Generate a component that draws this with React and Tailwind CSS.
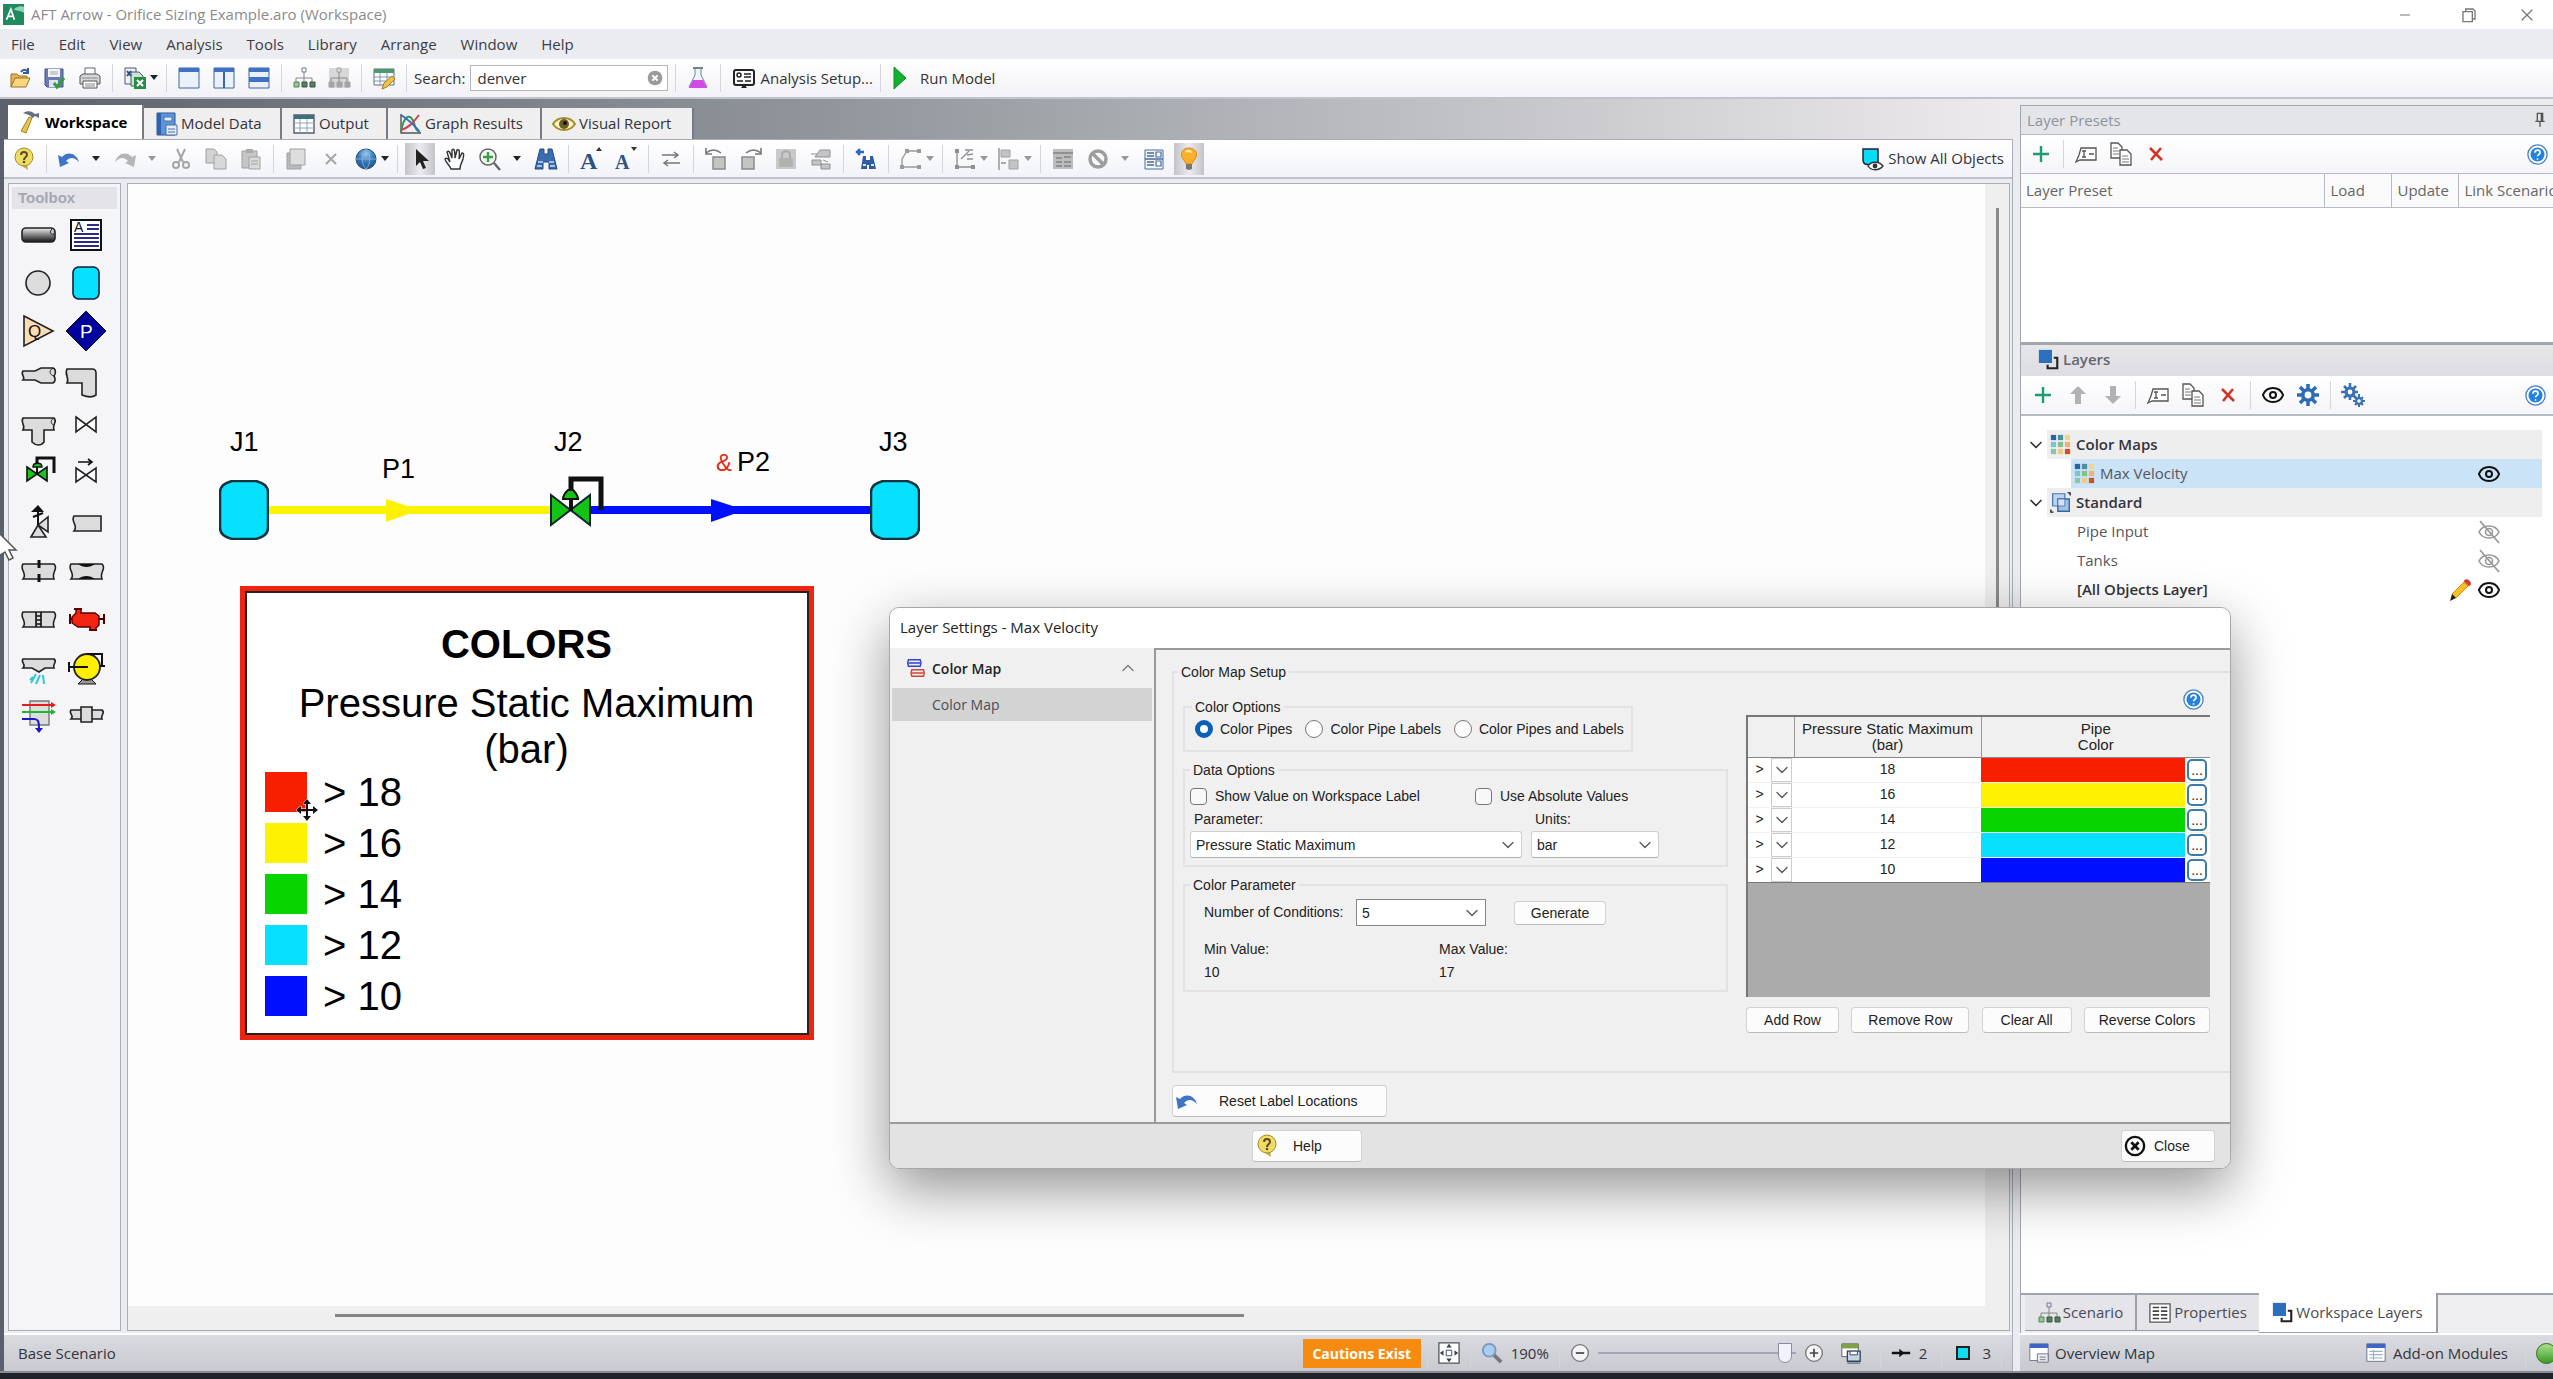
import { useState } from 'react'
import { Eye, X, Minus, ChevronDown, ChevronUp } from 'lucide-react'

const UI_FONT = "font-['Open_Sans','Noto_Sans',sans-serif]"
const FORM_FONT = "font-['Liberation_Sans',Arial,sans-serif]"

const CONDITIONS = [
  { value: 18, bg: 'bg-[#f81e00]' },
  { value: 16, bg: 'bg-[#fff200]' },
  { value: 14, bg: 'bg-[#08d400]' },
  { value: 12, bg: 'bg-[#08e0ff]' },
  { value: 10, bg: 'bg-[#0010ff]' },
]

const MENUS = ['File', 'Edit', 'View', 'Analysis', 'Tools', 'Library', 'Arrange', 'Window', 'Help']

function Svg({ children, size = 'h-6 w-6', box = '0 0 24 24' }) {
  return (
    <svg viewBox={box} className={`${size} shrink-0 overflow-visible`} fill="none" aria-hidden="true">
      {children}
    </svg>
  )
}

/* ---------- main toolbar icons ---------- */

const AppIcon = () => (
  <Svg size="h-[21px] w-[21px]">
    <path d="M0 0h24v24H0z" fill="#1f8a5e" />
    <path d="M12 6c5-4 8-4 12-3v7c-5-3-8-2-12-4z" fill="#8fd4b4" />
    <path d="M4 18L9 6l4 12M6 14h6" stroke="#fff" strokeWidth="2" />
  </Svg>
)
const OpenIcon = () => (
  <Svg>
    <path d="M3 21V8h6l2 2h8v3" fill="#e8b44c" stroke="#9a7224" />
    <path d="M3 21l4-9h15l-4 9z" fill="#f8d680" stroke="#9a7224" />
    <path d="M13 6c2-3 5-3 7 0M20 2v5h-5" stroke="#355a9c" strokeWidth="2" />
  </Svg>
)
const SaveIcon = () => (
  <Svg>
    <path d="M2 3h18v18H4l-2-2z" fill="#6e79b4" stroke="#454e86" />
    <path d="M5 3h12v8H5z" fill="#f2f4fa" />
    <path d="M7 6h8M7 8h8" stroke="#9aa" />
    <path d="M6 14h9v7H6z" fill="#dfe4ee" />
    <path d="M11 17l3 4 7-9" stroke="#2f9e3c" strokeWidth="3" />
  </Svg>
)
const PrintIcon = () => (
  <Svg>
    <path d="M7 9V2h10v7" fill="#fff" stroke="#666" />
    <path d="M2 10l3-2h14l3 2v8H2z" fill="#d5d7da" stroke="#555" />
    <path d="M5 15h14v7H5z" fill="#fff" stroke="#555" />
    <path d="M7 18h10M7 20h10M4 12h16" stroke="#888" />
  </Svg>
)
const ExportIcon = () => (
  <Svg>
    <path d="M2 2h11v16H2z" fill="#eef2f8" stroke="#557" />
    <path d="M8 6h8l4 4v10H8z" fill="#cfe3d5" stroke="#3b6b4e" />
    <path d="M4 5l4 5M8 5l-4 5" stroke="#2a4b90" strokeWidth="2" />
    <path d="M11 11h12v12H11z" fill="#2a8c46" />
    <path d="M14 14l6 6M20 14l-6 6" stroke="#fff" strokeWidth="2" />
  </Svg>
)
function WindowIcon({ split }) {
  return (
    <Svg>
      <path d="M2 2h20v20H2z" fill="#eaf1fb" stroke="#3c64a8" />
      <path d="M2 2h20v4H2z" fill="#3f72c4" />
      {split === 'v' && <path d="M12 6v16" stroke="#3c64a8" strokeWidth="2" />}
      {split === 'h' && <path d="M2 11h20v5H2z" fill="#3f72c4" />}
    </Svg>
  )
}
function OrgIcon({ muted, size }) {
  const c = muted ? '#a4a4a4' : '#5b7f62'
  return (
    <Svg size={size}>
      {muted && <path d="M2 2h20v20H2z" fill="#d8d8d8" />}
      <path d="M10 2h4v4h-4z" stroke={muted ? c : '#6a7894'} />
      <path d="M12 6v6M4 16v-4h16v4M12 12v4" stroke="#888" />
      <path d="M2 16h5v5H2z" fill={muted ? c : '#8fce84'} stroke={c} />
      <path d="M10 16h5v5h-5zM18 16h5v5h-5z" fill={c} stroke={muted ? c : '#33583a'} />
    </Svg>
  )
}
const TablePenIcon = () => (
  <Svg>
    <path d="M2 3h20v16H2z" fill="#fff" stroke="#5a6c86" />
    <path d="M2 3h20v4H2z" fill="#4c9a74" />
    <path d="M2 11h20M2 15h20M8 7v12M15 7v12" stroke="#8294b0" />
    <path d="M10 23l2-6 8-7 3 3-8 8z" fill="#f2c248" stroke="#a37b20" />
  </Svg>
)
const FlaskIcon = () => (
  <Svg>
    <path d="M9 2v7L3 21h18L15 9V2" fill="#eef3f7" stroke="#6c8494" />
    <path d="M7 14h10l4 8H3z" fill="#d34be6" />
    <path d="M7 2h10" stroke="#6c8494" strokeWidth="2" />
  </Svg>
)
const SetupIcon = () => (
  <Svg>
    <rect x="2" y="4" width="20" height="15" rx="2" stroke="#222" strokeWidth="2" />
    <circle cx="7" cy="9" r="2" stroke="#222" strokeWidth="1.5" />
    <path d="M12 8h7M12 11h7M5 15h6M13 15h6" stroke="#222" strokeWidth="1.5" />
    <path d="M9 22l3-4 3 4z" fill="#222" />
  </Svg>
)
const PlayIcon = () => (
  <Svg>
    <path d="M6 1l12 11L6 23z" fill="#14b030" stroke="#0d8a24" />
  </Svg>
)
const ClearIcon = () => (
  <Svg size="h-4 w-4">
    <circle cx="12" cy="12" r="11" fill="#9b9b9b" />
    <path d="M8 8l8 8M16 8l-8 8" stroke="#fff" strokeWidth="3" />
  </Svg>
)

/* ---------- workspace toolbar icons ---------- */

const HelpBulbIcon = () => (
  <Svg>
    <path d="M10 16h5l1 7-6-4z" fill="#c9a93a" />
    <circle cx="12" cy="10" r="9" fill="#efdc66" stroke="#a48b2a" />
    <path d="M9 8c0-4 6-4 6 0 0 2-3 2-3 5" stroke="#5c4c1c" strokeWidth="2" />
    <circle cx="12" cy="15" r="1.3" fill="#5c4c1c" />
  </Svg>
)
function UndoIcon({ redo }) {
  const c = redo ? '#b5b5b5' : '#3f74c6'
  return (
    <Svg>
      <g transform={redo ? 'matrix(-1 0 0 1 24 0)' : undefined}>
        <path d="M1 8l2 12 9-4-3-2c4-4 8-4 13 1-2-8-11-12-17-5z" fill={c} />
      </g>
    </Svg>
  )
}
const CutIcon = () => (
  <Svg>
    <path d="M8 2l6 13M16 2l-6 13" stroke="#a5a5a5" strokeWidth="2" />
    <circle cx="7" cy="18" r="3" stroke="#a5a5a5" strokeWidth="2" />
    <circle cx="17" cy="18" r="3" stroke="#a5a5a5" strokeWidth="2" />
  </Svg>
)
const CopyGrayIcon = () => (
  <Svg>
    <path d="M2 2h8l3 3v11H2z" fill="#d2d2d2" stroke="#a0a0a0" />
    <path d="M10 8h8l4 4v10H10z" fill="#d8d8d8" stroke="#a0a0a0" />
  </Svg>
)
const PasteIcon = () => (
  <Svg>
    <path d="M3 4h15v17H3z" fill="#c6c6c6" stroke="#a0a0a0" />
    <path d="M7 2h7v4H7z" fill="#aaa" />
    <path d="M10 10h11v12H10z" fill="#dadada" stroke="#a0a0a0" />
    <path d="M12 14h7M12 17h7" stroke="#a0a0a0" />
  </Svg>
)
const StackIcon = () => (
  <Svg>
    <path d="M3 6h14v16H3z" fill="#bbb" stroke="#a0a0a0" />
    <path d="M6 2h15v16H6z" fill="#ddd" stroke="#a0a0a0" />
  </Svg>
)
const GlobeIcon = () => (
  <Svg>
    <defs>
      <radialGradient id="globe" cx="0.5" cy="0.25" r="0.8">
        <stop offset="0" stopColor="#9cc8ec" />
        <stop offset="0.5" stopColor="#3478b8" />
        <stop offset="1" stopColor="#1c4c84" />
      </radialGradient>
    </defs>
    <circle cx="12" cy="12" r="10" fill="url(#globe)" stroke="#24507e" />
    <path d="M2 12h20M12 2c-5 5-5 15 0 20M12 2c5 5 5 15 0 20" stroke="#8db8de" strokeWidth="0.8" />
  </Svg>
)
const PointerIcon = () => (
  <Svg>
    <path d="M8 2v17l4-4 3 7 3-1-3-7h6z" fill="#222" />
  </Svg>
)
const HandIcon = () => (
  <Svg>
    <path d="M8 22c-1-4-6-7-6-10 2-2 3 0 5 3L4 5c2-2 3 0 5 6L9 3c2-2 3 0 3 8l2-8c2-1 3 0 2 9l3-6c2 0 2 1 1 6-1 4-3 5-3 10z" fill="#fff" stroke="#333" strokeWidth="1.4" />
  </Svg>
)
const ZoomIcon = () => (
  <Svg>
    <circle cx="10" cy="10" r="8" fill="#f3faf2" stroke="#666" strokeWidth="1.5" />
    <path d="M16 16l6 7" stroke="#666" strokeWidth="2.4" />
    <path d="M10 5v10M5 10h10" stroke="#3aa048" strokeWidth="2.4" />
  </Svg>
)
const BinocularsIcon = () => (
  <Svg>
    <path d="M6 2h4v5h4V2h4l5 20h-8v-7H9v7H1z" fill="#3a6cb0" stroke="#24487c" />
    <path d="M4 15h5M15 15h5M3 19h5M16 19h5" stroke="#c9dcf3" strokeWidth="1.6" />
  </Svg>
)
function FontSizeIcon({ up }) {
  return (
    <Svg>
      <text x="1" y="22" fontFamily="Liberation Serif, serif" fontWeight="700" fontSize={up ? 24 : 20} fill="#2d5286">A</text>
      {up ? <path d="M17 4l3-4 3 4z" fill="#333" /> : <path d="M17 0l3 4 3-4z" fill="#333" />}
    </Svg>
  )
}
const SwapIcon = () => (
  <Svg>
    <path d="M3 8h16M15 5l4 3-4 3M21 16H5M9 13l-4 3 4 3" stroke="#777" strokeWidth="1.5" />
  </Svg>
)
function RotateIcon({ right }) {
  return (
    <Svg>
      <g transform={right ? 'matrix(-1 0 0 1 24 0)' : undefined}>
        <path d="M9 10h12v12H9z" fill="#c4c4c4" stroke="#8a8a8a" strokeWidth="1.5" />
        <path d="M17 6C12 2 7 2 2 6M2 1v6h6" stroke="#777" strokeWidth="1.6" />
      </g>
    </Svg>
  )
}
const LockIcon = () => (
  <Svg>
    <path d="M2 2h20v20H2z" fill="#c9c9c9" />
    <path d="M8 11V8c0-5 8-5 8 0v3" stroke="#aaa" strokeWidth="2" />
    <path d="M5 11h14v9H5z" fill="#b2b2b2" />
  </Svg>
)
const RenumberIcon = () => (
  <Svg>
    <path d="M6 10L11 3h10v7zM3 13h9v5H3zM12 17h9v5h-9z" fill="#c4c4c4" stroke="#909090" />
    <path d="M2 7h6M14 13l5 2" stroke="#909090" />
  </Svg>
)
const FindIcon = () => (
  <Svg>
    <path d="M3 5h7M6 2L3 5l3 3" stroke="#2d66c4" strokeWidth="2.4" />
    <path d="M9 9h3v4h4V9h3l3 13h-7v-4h-2v4H7z" fill="#2f5ca0" />
    <path d="M9 18h3M17 18h3" stroke="#d6e4f6" strokeWidth="2" />
  </Svg>
)
const PolyIcon = () => (
  <Svg>
    <path d="M20 4H8L3 12v8h17" stroke="#9a9a9a" strokeWidth="1.4" />
    <path d="M6 2h4v4H6zM18 2h4v4h-4zM1 18h4v4H1zM18 18h4v4h-4z" fill="#9a9a9a" />
  </Svg>
)
const AxisIcon = () => (
  <Svg>
    <path d="M4 2v18h17M8 12l8-8M12 3h8M14 8l6-1M14 12h6" stroke="#909090" strokeWidth="1.4" />
    <path d="M2 2h4v4H2zM2 18h4v4H2zM18 18h4v4h-4z" fill="#909090" />
  </Svg>
)
const AlignIcon = () => (
  <Svg>
    <path d="M2 1v22M4 16h5" stroke="#909090" strokeWidth="1.4" />
    <path d="M4 3h9v7H4zM12 13h9v9h-9z" fill="#c4c4c4" stroke="#a0a0a0" />
  </Svg>
)
const FormIcon = () => (
  <Svg>
    <path d="M2 2h20v20H2z" fill="#bdbdbd" />
    <path d="M2 6h20M5 11h6M13 10h7M5 15h6M13 15h7M5 19h6M13 19h7" stroke="#909090" strokeWidth="2" />
  </Svg>
)
const ForbidIcon = () => (
  <Svg>
    <circle cx="12" cy="12" r="8" stroke="#9e9e9e" strokeWidth="3.5" />
    <path d="M6 6l12 12" stroke="#9e9e9e" strokeWidth="3.5" />
  </Svg>
)
const SheetIcon = () => (
  <Svg>
    <path d="M3 3h18v19H3z" fill="#f4f8fd" stroke="#476a9c" />
    <path d="M3 12h18M5 6h7M5 9h7M5 15h7M5 18h7" stroke="#476a9c" strokeWidth="1.4" />
    <path d="M14 5h5v5h-5zM14 14h5v5h-5z" stroke="#476a9c" strokeWidth="1.2" />
  </Svg>
)
const BulbIcon = () => (
  <Svg>
    <path d="M12 1c-6 0-9 5-7 9 1 3 3 4 4 7h6c1-3 3-4 4-7 2-4-1-9-7-9z" fill="#fbb02c" stroke="#d88c14" />
    <path d="M9 5c2-2 5-1 5 1" stroke="#fff0c0" strokeWidth="2" />
    <path d="M9 17h6v5l-3 1-3-1z" fill="#777" />
  </Svg>
)
const ShowAllIcon = () => (
  <Svg>
    <path d="M3 2h15v15c-4 1-11 1-13 0-2-1-2-3-2-4z" fill="#08dcf4" stroke="#223" strokeWidth="1.5" />
    <path d="M8 19c3-5 11-5 15 0-4 5-12 5-15 0z" fill="#fff" stroke="#333" strokeWidth="1.4" />
    <circle cx="15" cy="19" r="2.4" fill="#333" />
  </Svg>
)

/* ---------- tab icons ---------- */

const HammerIcon = () => (
  <Svg>
    <path d="M5 3c5-3 9-2 12 1l4-1v5l-4-2-2 2-4-3z" fill="#66707c" />
    <path d="M11 7l3 1-6 15-5-2z" fill="#e6c34a" stroke="#a3832a" />
  </Svg>
)
const NotebookIcon = () => (
  <Svg>
    <path d="M3 1h18v22H3z" fill="#5b96dc" stroke="#2c5796" />
    <path d="M3 1h4v22H3z" fill="#2f62ac" />
    <path d="M10 5h8v4h-8zM12 13h11v10H12z" fill="#e5edf8" stroke="#4a6ea6" />
    <path d="M14 17h7M14 20h7" stroke="#4a6ea6" />
  </Svg>
)
const GridIcon = () => (
  <Svg>
    <path d="M2 3h20v18H2z" fill="#fff" stroke="#4d6076" strokeWidth="1.4" />
    <path d="M2 3h20v4H2z" fill="#3f6f7e" />
    <path d="M2 11h20M2 16h20M8 7v14M15 7v14" stroke="#8fa4b8" />
  </Svg>
)
const ChartIcon = () => (
  <Svg>
    <path d="M3 2v19h20" stroke="#555" strokeWidth="1.4" />
    <path d="M3 20C6 2 13 1 16 11c1 5 3 8 6 9" stroke="#2f9a50" strokeWidth="2" />
    <path d="M3 3c5 3 12 9 18 16" stroke="#3868c8" strokeWidth="2" />
    <path d="M3 18C10 16 14 12 21 3" stroke="#d03f58" strokeWidth="2" />
  </Svg>
)
const GoldEyeIcon = () => (
  <Svg>
    <path d="M1 12c5-8 17-8 22 0-5 8-17 8-22 0z" fill="#fff4c0" stroke="#a18e30" strokeWidth="2" />
    <circle cx="12" cy="12" r="5" fill="#6b5d28" />
    <circle cx="13" cy="11" r="2" fill="#111" />
  </Svg>
)

/* ---------- side panel icons ---------- */

const PlusIcon = () => (
  <Svg>
    <path d="M12 4v16M4 12h16" stroke="#1c9c72" strokeWidth="2.4" />
  </Svg>
)
const RenameIcon = () => (
  <Svg>
    <path d="M7 6h15v12H6L2 20l3-7z" fill="#fff" stroke="#555" strokeWidth="1.3" />
    <path d="M8 9h4M8 15h4M10 9v6M15 12h5" stroke="#555" strokeWidth="1.3" />
  </Svg>
)
const PagesIcon = () => (
  <Svg>
    <path d="M2 1h7l4 4v11H2z" fill="#fff" stroke="#555" strokeWidth="1.3" />
    <path d="M11 8h7l4 4v11H11z" fill="#fff" stroke="#555" strokeWidth="1.3" />
    <path d="M4 6h5M4 9h6M4 12h6M13 14h6M13 17h7M13 20h7" stroke="#777" />
  </Svg>
)
const DeleteIcon = () => (
  <Svg>
    <path d="M6 6l12 12M17 6L7 18" stroke="#d33422" strokeWidth="2.6" />
  </Svg>
)
const GrayXIcon = () => (
  <Svg>
    <path d="M7 7l10 10M17 7L7 17" stroke="#a5a5a5" strokeWidth="2" />
  </Svg>
)
function ArrowIcon({ down }) {
  return (
    <Svg>
      <path d={down ? 'M12 21l8-8h-5V3H9v10H4z' : 'M12 3l8 8h-5v10H9V11H4z'} fill="#b2b2b2" />
    </Svg>
  )
}
const InfoIcon = () => (
  <Svg size="h-[21px] w-[21px]">
    <circle cx="12" cy="12" r="11" fill="#fff" stroke="#4a80c0" strokeWidth="1.5" />
    <circle cx="12" cy="12" r="8" fill="#2583de" />
    <path d="M9 10c0-4 6-4 6 0 0 2-3 2-3 4" stroke="#fff" strokeWidth="1.8" />
    <circle cx="12" cy="17" r="1" fill="#fff" />
  </Svg>
)
const GearIcon = () => (
  <Svg>
    <path d="M12 1v22M1 12h22M4 4l16 16M20 4L4 20" stroke="#2b6cb4" strokeWidth="3.5" />
    <circle cx="12" cy="12" r="7" fill="#2b6cb4" />
    <circle cx="12" cy="12" r="3.4" fill="#fff" />
  </Svg>
)
const GearsIcon = () => (
  <Svg>
    <g stroke="#3a72b4" strokeWidth="2.6">
      <path d="M9 0v17M0 9h17M3 3l12 12M15 3L3 15" />
      <path d="M18 11v13M12 18h12M14 14l8 8M22 14l-8 8" strokeWidth="2" />
    </g>
    <circle cx="9" cy="9" r="5.5" fill="#3a72b4" />
    <circle cx="9" cy="9" r="2.4" fill="#fff" />
    <circle cx="18" cy="18" r="4" fill="#3a72b4" />
    <circle cx="18" cy="18" r="1.8" fill="#fff" />
  </Svg>
)
const LayersIcon = () => (
  <Svg size="h-[21px] w-[21px]">
    <path d="M1 1h15v15H1z" fill="#2b70bc" />
    <path d="M18 10h4v12H11v-4" stroke="#222" strokeWidth="2.4" />
  </Svg>
)
const ColorGridIcon = () => {
  const cells = ['#2a64a8', '#4a90a0', '#f2d48c', '#7cc4cc', '#84c08c', '#f2b070', '#8cc4a8', '#e8cc88', '#cc5030']
  return (
    <Svg size="h-[21px] w-[21px]">
      {cells.map((c, i) => (
        <rect key={i} x={1 + (i % 3) * 8} y={1 + Math.floor(i / 3) * 8} width="6" height="6" fill={c} />
      ))}
    </Svg>
  )
}
const StandardIcon = () => (
  <Svg size="h-[21px] w-[21px]">
    <path d="M3 2h14v14H3z" fill="#bcd3ee" stroke="#4678b0" strokeWidth="1.4" />
    <path d="M9 8h13v14H9z" fill="#a4c2e6" stroke="#3567a4" strokeWidth="1.6" />
    <path d="M9 8h8v8H9z" fill="#d4e4f6" stroke="#4678b0" />
    <path d="M20 1h3v3M1 20v3h3" stroke="#223" strokeWidth="1.6" />
  </Svg>
)
const HiddenIcon = () => (
  <Svg>
    <path d="M2 12c4-8 16-8 20 0-4 8-16 8-20 0z" stroke="#999" strokeWidth="1.6" />
    <circle cx="12" cy="12" r="3.5" stroke="#999" strokeWidth="1.6" />
    <path d="M3 1l19 22" stroke="#999" strokeWidth="1.8" />
  </Svg>
)
const PencilIcon = () => (
  <Svg>
    <path d="M4 16L16 4l4 4L8 20z" fill="#f6bf26" stroke="#c8921c" />
    <path d="M4 16l4 4-6 3z" fill="#222" />
    <path d="M17 3c2-2 7 2 4 4z" fill="#d63a30" stroke="#d63a30" strokeWidth="2" />
  </Svg>
)
const PinIcon = () => (
  <Svg size="h-4 w-4">
    <path d="M8 2h8v12H8zM5 14h14M12 14v8" stroke="#555" strokeWidth="2" />
    <path d="M13 2h3v12h-3z" fill="#555" />
  </Svg>
)
const PropsIcon = () => (
  <Svg size="h-[22px] w-[22px]">
    <path d="M1 2h22v20H1z" fill="#fff" stroke="#555" strokeWidth="1.4" />
    <path d="M4 6h7M4 10h7M4 14h7M4 18h7M13 6h7M13 10h7M13 14h7M13 18h7" stroke="#444" strokeWidth="1.8" />
  </Svg>
)
const OverviewIcon = () => (
  <Svg size="h-5 w-5">
    <path d="M1 1h22v20H1z" fill="#fff" stroke="#667" />
    <path d="M1 1h22v5H1z" fill="#3f66c4" />
    <path d="M10 13h13v10H10z" fill="#e8ebf0" stroke="#667" />
    <path d="M13 17h7M13 20h7" stroke="#667" />
  </Svg>
)
const ModulesIcon = () => (
  <Svg size="h-5 w-5">
    <path d="M1 1h22v21H1z" fill="#fff" stroke="#567" />
    <path d="M1 1h22v5H1z" fill="#3f66c4" />
    <path d="M4 10h16M4 14h16M4 18h16M9 8v12" stroke="#9ab0cc" strokeWidth="1.4" />
  </Svg>
)
const MapPairIcon = () => (
  <Svg size="h-5 w-5">
    <path d="M3 2h14l1 4-1 4H3L2 6z" stroke="#3440d8" strokeWidth="1.8" />
    <path d="M3 6h14" stroke="#3440d8" strokeWidth="1.6" />
    <path d="M7 14h14l1 4-1 4H7l-1-4z" stroke="#d04438" strokeWidth="1.8" />
    <path d="M7 18h14" stroke="#d04438" strokeWidth="1.6" />
  </Svg>
)

/* ---------- toolbox shapes, drawn in a 40x40 box ---------- */

const line = { stroke: '#222', strokeWidth: 1.6, fill: '#dcdcdc' }

const TOOLS = [
  {
    name: 'Pipe',
    draw: (
      <>
        <defs>
          <linearGradient id="pipe" x1="0" y1="0" x2="0" y2="1">
            <stop offset="0" stopColor="#eee" />
            <stop offset="1" stopColor="#111" />
          </linearGradient>
        </defs>
        <rect x="4" y="13" width="33" height="14" rx="4" fill="url(#pipe)" stroke="#222" strokeWidth="1.6" />
        <path d="M34 14c-3 3-1 6 2 5" stroke="#222" fill="#ccc" />
      </>
    ),
  },
  {
    name: 'Annotation',
    draw: (
      <>
        <path d="M5 5h30v30H5z" fill="#fff" stroke="#111" strokeWidth="2" />
        <path d="M21 10h12M21 14h12M8 19h25M8 23h25M8 27h25M8 31h25" stroke="#2c2c84" strokeWidth="2" />
        <text x="8" y="17" fontSize="14" fontFamily="Liberation Sans" fill="#111">A</text>
      </>
    ),
  },
  { name: 'Branch', draw: <circle cx="20" cy="20" r="12" {...line} /> },
  { name: 'Tank', draw: <path d="M12 4h16c4 1 5 3 5 6v20c0 3-1 5-5 6H12c-4-1-5-3-5-6V10c0-3 1-5 5-6z" fill="#08e0ff" stroke="#123" strokeWidth="1.6" /> },
  {
    name: 'Assigned Flow',
    draw: (
      <>
        <path d="M6 5l29 15L6 35z" fill="#fddcb4" stroke="#222" strokeWidth="1.6" />
        <text x="10" y="26" fontSize="17" fontFamily="Liberation Sans" fill="#111">Q</text>
      </>
    ),
  },
  {
    name: 'Assigned Pressure',
    draw: (
      <>
        <path d="M20 0l20 20-20 20L0 20z" fill="#00009c" stroke="#111" />
        <text x="14" y="27" fontSize="19" fontFamily="Liberation Sans" fill="#fff">P</text>
      </>
    ),
  },
  {
    name: 'Area Change',
    draw: (
      <>
        <path d="M5 12h12l6-3h12c3 1 3 6 1 8 2 3 1 6-1 7H23l-6-3H5c3-3-3-5 0-9z" {...line} />
        <path d="M35 9c-5 3-3 7 1 8" stroke="#222" fill="none" />
      </>
    ),
  },
  { name: 'Bend', draw: <path d="M1 10h25c3 0 4 1 4 4v22c-4 3-9 2-14 0V24H1c3-5-3-8 0-14z" {...line} /> },
  {
    name: 'Tee',
    draw: (
      <>
        <path d="M5 11h31c4 4-2 5 0 12H26v12c-3 4-8 4-12 0V23H5c3-5-3-7 0-12z" {...line} />
        <path d="M36 11c-5 3-2 7 0 7" stroke="#222" fill="none" />
      </>
    ),
  },
  { name: 'Valve', draw: <path d="M10 10l20 15V10L10 25z" {...line} fill="#fff" /> },
  {
    name: 'Control Valve',
    draw: (
      <>
        <path d="M19 11V3h17v15" stroke="#111" strokeWidth="3" fill="none" />
        <path d="M9 12l20 14V12L9 26z" fill="#18c818" stroke="#111" strokeWidth="1.6" />
        <path d="M19 11v8" stroke="#111" strokeWidth="2" />
        <path d="M15 12c0-5 9-5 9 0z" fill="#18c818" stroke="#111" strokeWidth="1.4" />
      </>
    ),
  },
  {
    name: 'Check Valve',
    draw: (
      <>
        <path d="M10 13l20 14V13L10 27z" {...line} fill="#fff" />
        <path d="M12 7h13M22 4l4 3-4 3" stroke="#111" strokeWidth="1.6" fill="none" />
      </>
    ),
  },
  {
    name: 'Relief Valve',
    draw: (
      <>
        <path d="M13 34l7-12 8 12zM20 22l10-8v15z" {...line} />
        <path d="M20 22V6M15 14l10-4" stroke="#111" strokeWidth="2" />
        <path d="M13 9l7-7 6 7z" fill="#111" />
      </>
    ),
  },
  { name: 'Dead End', draw: <path d="M8 13h27v15H8c5-6-4-9 0-15z" {...line} /> },
  {
    name: 'Orifice',
    draw: (
      <>
        <path d="M5 13h31c5 5-3 8 0 15H5c5-6-4-9 0-15z" {...line} />
        <path d="M21 9v8M21 23v8" stroke="#111" strokeWidth="3" />
      </>
    ),
  },
  {
    name: 'Venturi',
    draw: (
      <>
        <path d="M5 13h31c5 5-3 8 0 15H5c5-6-4-9 0-15z" {...line} />
        <path d="M12 13h17c-5 4-12 4-17 0zM12 28h17c-5-4-12-4-17 0z" fill="#111" />
      </>
    ),
  },
  {
    name: 'Screen',
    draw: (
      <>
        <path d="M5 13h31c5 5-3 8 0 15H5c5-6-4-9 0-15z" {...line} />
        <path d="M18 13v15M23 13v15M18 17h5M18 21h5M18 25h5" stroke="#111" strokeWidth="1.6" />
      </>
    ),
  },
  {
    name: 'Heat Exchanger',
    draw: (
      <>
        <path d="M4 20h34" stroke="#111" strokeWidth="2" />
        <path d="M10 10h5v4h14l4 3v9l-3 3v2h-6v-3H12l-6-4v-6l4-4z" fill="#f02410" stroke="#500" strokeWidth="1.4" />
        <path d="M4 15v10M38 15v10M8 10h8M23 31h8" stroke="#500" strokeWidth="2" />
      </>
    ),
  },
  {
    name: 'Spray Discharge',
    draw: (
      <>
        <path d="M5 12h31c4 3-2 5 0 9h-9l-6 4-7-4H5c4-4-3-5 0-9z" {...line} />
        <path d="M18 27l-5 9M22 28l-4 9M25 28l1 9M15 30l-3 3" stroke="#30c8d8" strokeWidth="2" fill="none" />
      </>
    ),
  },
  {
    name: 'Compressor',
    draw: (
      <>
        <path d="M12 37l5-5h8l5 5z" fill="#999" stroke="#111" />
        <circle cx="21" cy="20" r="13" fill="#fff000" stroke="#222" strokeWidth="1.8" />
        <path d="M3 20h19M3 15v10M21 7h15v12M33 19h6" stroke="#111" strokeWidth="2" fill="none" />
      </>
    ),
  },
  {
    name: 'General Component',
    draw: (
      <>
        <path d="M12 6h19v24H12z" fill="#ddd" stroke="#777" strokeWidth="1.4" />
        <path d="M4 10h31" stroke="#e02020" strokeWidth="2" />
        <path d="M4 17h31" stroke="#18b830" strokeWidth="2" />
        <path d="M4 24h12c4 0 5 2 5 10" stroke="#1818c8" strokeWidth="2" fill="none" />
        <path d="M33 7l5 3-5 3z" fill="#e02020" />
        <path d="M33 14l5 3-5 3z" fill="#18b830" />
        <path d="M17 33h8l-4 5z" fill="#1818c8" />
      </>
    ),
  },
  {
    name: 'Jumper',
    draw: (
      <>
        <path d="M5 15h31c4 3-2 5 0 9H5c4-4-3-5 0-9z" {...line} />
        <path d="M15 12h11v15H15z" {...line} />
      </>
    ),
  },
]

/* ---------- shared controls ---------- */

function IconButton({ icon, label, active }) {
  return (
    <button
      type="button"
      aria-label={label}
      className={`flex h-8 w-[30px] shrink-0 items-center justify-center ${active ? 'bg-gradient-to-r from-[#c4c4c8] via-[#ececf0] to-[#c4c4c8]' : ''}`}
    >
      {icon}
    </button>
  )
}

function Caret({ muted }) {
  return (
    <svg viewBox="0 0 8 6" className="h-[6px] w-2" aria-hidden="true">
      <path d="M0 0h8L4 5z" fill={muted ? '#999' : '#222'} />
    </svg>
  )
}

function DropButton({ icon, label, wide, muted }) {
  return (
    <button
      type="button"
      aria-label={label}
      className={`flex h-8 shrink-0 items-center ${wide ? 'w-[51px]' : 'w-[39px]'}`}
    >
      <span className="flex w-[30px] justify-center">{icon}</span>
      <span className={wide ? 'ml-2' : ''}>
        <Caret muted={muted} />
      </span>
    </button>
  )
}

function Sep() {
  return <span className="mx-[2px] h-7 w-px shrink-0 bg-[#d4d6dc]" />
}

function PushButton({ children, className = '' }) {
  return (
    <button
      type="button"
      className={`flex items-center justify-center rounded-[4px] border border-[#d2d2d2] border-b-[#bcbcbc] bg-[#fcfcfc] text-[14px] leading-5 whitespace-nowrap ${className}`}
    >
      {children}
    </button>
  )
}

function Select({ id, value, className = '', dark }) {
  return (
    <div className={`relative ${className}`}>
      <select
        id={id}
        defaultValue={value}
        className={`h-[27px] w-full appearance-none border bg-white pl-[5px] text-[14px] leading-5 ${dark ? 'border-[#888]' : 'rounded-[3px] border-[#d0d0d0] border-b-[#b0b0b0]'}`}
      >
        <option>{value}</option>
      </select>
      <ChevronDown className="pointer-events-none absolute top-1 right-1 h-5 w-5 text-[#555]" strokeWidth={1.5} />
    </div>
  )
}

function Group({ title, className = '', children }) {
  return (
    <fieldset className={`min-w-0 border-2 border-[#e2e2e4] ${className}`}>
      <legend className="px-[3px] leading-5">{title}</legend>
      {children}
    </fieldset>
  )
}

/* ---------- window chrome ---------- */

function TitleBar() {
  return (
    <header className="flex h-[29px] shrink-0 items-center bg-white pl-[3px]">
      <AppIcon />
      <h1 className="ml-[7px] flex-1 text-[15px] text-[#8b8b8b]">AFT Arrow - Orifice Sizing Example.aro (Workspace)</h1>
      <div className="flex items-center gap-9 pr-4 text-[#777]">
        <button type="button" aria-label="Minimize" className="mr-1 px-1">
          <Minus className="h-4 w-4" strokeWidth={1.5} />
        </button>
        <button type="button" aria-label="Restore" className="px-1">
          <Svg size="h-4 w-4">
            <path d="M3 7h14v15H3zM7 7V3h11l3 3v12h-4" stroke="#777" strokeWidth="2" />
          </Svg>
        </button>
        <button type="button" aria-label="Close window">
          <X className="h-5 w-5" strokeWidth={1.5} />
        </button>
      </div>
    </header>
  )
}

function MenuBar() {
  return (
    <nav className="flex h-[30px] shrink-0 items-center gap-6 bg-[#ebecef] pl-[11px] text-[15px] text-[#3c3c46]">
      {MENUS.map(m => (
        <button key={m} type="button">{m}</button>
      ))}
    </nav>
  )
}

function MainToolbar() {
  return (
    <div className="flex h-10 shrink-0 items-center gap-[5px] border-b-2 border-[#c0c3cc] bg-gradient-to-b from-white to-[#f2f2f7] pl-[5px] text-[15px] text-[#333]">
      <IconButton icon={<OpenIcon />} label="Open" />
      <IconButton icon={<SaveIcon />} label="Save" />
      <IconButton icon={<PrintIcon />} label="Print" />
      <Sep />
      <DropButton icon={<ExportIcon />} label="Export" />
      <Sep />
      <IconButton icon={<WindowIcon />} label="Single window" />
      <IconButton icon={<WindowIcon split="v" />} label="Tile vertically" />
      <IconButton icon={<WindowIcon split="h" />} label="Tile horizontally" />
      <Sep />
      <IconButton icon={<OrgIcon />} label="Scenario tree" />
      <IconButton icon={<OrgIcon muted />} label="Scenario tools" />
      <Sep />
      <IconButton icon={<TablePenIcon />} label="Edit table" />
      <Sep />
      <label htmlFor="search">Search:</label>
      <div className="flex h-[26px] w-[198px] items-center border border-[#b4b6bc] bg-white pr-1 pl-[6px]">
        <input id="search" defaultValue="denver" className="min-w-0 flex-1 bg-transparent outline-none" />
        <button type="button" aria-label="Clear search"><ClearIcon /></button>
      </div>
      <Sep />
      <IconButton icon={<FlaskIcon />} label="Fluid" />
      <Sep />
      <button type="button" className="flex items-center gap-1 pl-1 whitespace-nowrap">
        <SetupIcon />
        Analysis Setup...
      </button>
      <Sep />
      <button type="button" className="flex items-center gap-2 whitespace-nowrap">
        <PlayIcon />
        Run Model
      </button>
    </div>
  )
}

function WorkspaceTabs() {
  const [active, setActive] = useState('Workspace')
  const tabs = [
    { name: 'Workspace', icon: <HammerIcon />, width: 'w-[136px]' },
    { name: 'Model Data', icon: <NotebookIcon />, width: 'w-[138px]' },
    { name: 'Output', icon: <GridIcon />, width: 'w-[106px]' },
    { name: 'Graph Results', icon: <ChartIcon />, width: 'w-[154px]' },
    { name: 'Visual Report', icon: <GoldEyeIcon />, width: 'w-[152px]' },
  ]
  return (
    <div className="flex h-10 shrink-0 items-end bg-gradient-to-r from-[#5c616b] via-[#9ea2a7] to-[#eeebee] pl-2" role="tablist">
      {tabs.map(t => (
        <button
          key={t.name}
          type="button"
          role="tab"
          aria-selected={active === t.name}
          onClick={() => setActive(t.name)}
          className={`flex items-center gap-[3px] border-r-2 border-[#777b84] pl-[10px] text-[15px] whitespace-nowrap ${t.width} ${
            active === t.name ? 'h-[34px] bg-white font-bold text-black' : 'h-[31px] bg-[#efefef] text-[#33333b]'
          }`}
        >
          {t.icon}
          {t.name}
        </button>
      ))}
    </div>
  )
}

function WorkspaceToolbar() {
  return (
    <div className="flex h-10 shrink-0 items-center gap-[5px] border-t border-b-2 border-t-[#a8acb4] border-b-[#bfc3cb] bg-gradient-to-b from-white to-[#f2f3f9] pr-2 pl-[5px]">
      <IconButton icon={<HelpBulbIcon />} label="Help" />
      <Sep />
      <DropButton icon={<UndoIcon />} label="Undo" wide />
      <DropButton icon={<UndoIcon redo />} label="Redo" wide muted />
      <IconButton icon={<CutIcon />} label="Cut" />
      <IconButton icon={<CopyGrayIcon />} label="Copy" />
      <IconButton icon={<PasteIcon />} label="Paste" />
      <Sep />
      <IconButton icon={<StackIcon />} label="Duplicate" />
      <IconButton icon={<GrayXIcon />} label="Delete" />
      <DropButton icon={<GlobeIcon />} label="Global edit" />
      <Sep />
      <IconButton icon={<PointerIcon />} label="Select" active />
      <IconButton icon={<HandIcon />} label="Pan" />
      <DropButton icon={<ZoomIcon />} label="Zoom" wide />
      <IconButton icon={<BinocularsIcon />} label="Find" />
      <Sep />
      <IconButton icon={<FontSizeIcon up />} label="Increase font" />
      <IconButton icon={<FontSizeIcon />} label="Decrease font" />
      <Sep />
      <IconButton icon={<SwapIcon />} label="Reverse direction" />
      <Sep />
      <IconButton icon={<RotateIcon />} label="Rotate left" />
      <IconButton icon={<RotateIcon right />} label="Rotate right" />
      <IconButton icon={<LockIcon />} label="Lock" />
      <IconButton icon={<RenumberIcon />} label="Renumber" />
      <Sep />
      <IconButton icon={<FindIcon />} label="Find next" />
      <Sep />
      <DropButton icon={<PolyIcon />} label="Segments" muted />
      <Sep />
      <DropButton icon={<AxisIcon />} label="Scale" muted />
      <DropButton icon={<AlignIcon />} label="Align" muted />
      <Sep />
      <IconButton icon={<FormIcon />} label="Inspect" />
      <DropButton icon={<ForbidIcon />} label="Special conditions" wide muted />
      <IconButton icon={<SheetIcon />} label="Data sheet" />
      <IconButton icon={<BulbIcon />} label="Highlight" active />
      <button type="button" className="ml-auto flex items-center gap-1 text-[15px] whitespace-nowrap text-[#33333b]">
        <ShowAllIcon />
        Show All Objects
      </button>
    </div>
  )
}

function Toolbox() {
  return (
    <aside className="flex w-[113px] shrink-0 flex-col border border-[#a9aeb8] bg-[#f5f5f7] p-[3px]">
      <h2 className={`h-[22px] bg-[#e4e4e8] pl-[6px] text-[15px] leading-[22px] font-bold text-[#a4a6b2] ${FORM_FONT}`}>Toolbox</h2>
      <div className="mt-[2px] grid grid-cols-[48px_48px] auto-rows-[48px] place-items-center pl-[2px]">
        {TOOLS.map(t => (
          <button key={t.name} type="button" aria-label={t.name}>
            <Svg size="h-10 w-10" box="0 0 40 40">{t.draw}</Svg>
          </button>
        ))}
      </div>
    </aside>
  )
}

/* ---------- canvas ---------- */

function Tank({ className }) {
  return (
    <svg viewBox="0 0 50 60" className={`absolute h-[60px] w-[50px] ${className}`} aria-hidden="true">
      <path d="M13 1h24c8 2 12 5 12 11v36c0 6-4 9-12 11H13C5 57 1 54 1 48V12C1 6 5 3 13 1z" fill="#08e0ff" stroke="#12343c" strokeWidth="2.5" />
    </svg>
  )
}

function Legend() {
  return (
    <section className="absolute top-[402px] left-[112px] w-[574px] border-[5px] border-[#ee2410] bg-white text-black">
      <div className="h-[444px] border-2 border-[#222] pt-[28px] pl-[18px] pr-[19px] text-[40px] leading-[46px]">
        <h2 className="text-center text-[40px] font-bold">COLORS</h2>
        <p className="mt-[13px] text-center">Pressure Static Maximum (bar)</p>
        <ul className="flex flex-col gap-[11px]">
          {CONDITIONS.map(c => (
            <li key={c.value} className="flex h-10 items-center gap-4">
              <span className={`h-10 w-[42px] ${c.bg}`} />
              <span>&gt; {c.value}</span>
            </li>
          ))}
        </ul>
      </div>
    </section>
  )
}

function Canvas() {
  const label = 'absolute text-[27px] leading-8 text-black'
  return (
    <main className="flex min-w-0 flex-1 flex-col border border-[#a9aeb8] bg-[#efeff0]">
      <div className="flex min-h-0 flex-1">
        <div className={`relative min-w-0 flex-1 bg-[#fdfdfd] ${FORM_FONT}`}>
          <svg className="absolute top-[290px] left-[90px] h-[70px] w-[710px]" viewBox="218 474 710 70" aria-hidden="true">
            <path d="M268 510h284" stroke="#fff200" strokeWidth="8" />
            <path d="M386 499l34 11-34 12z" fill="#fff200" />
            <path d="M590 510h282" stroke="#0010ff" strokeWidth="8" />
            <path d="M711 499l34 11-34 12z" fill="#0010ff" />
            <path d="M571 492v-13h30v31" stroke="#111" strokeWidth="5" fill="none" />
            <path d="M551 495l39 30v-30l-39 30z" fill="#14c414" stroke="#123" strokeWidth="2" />
            <path d="M571 498v13" stroke="#111" strokeWidth="4" />
            <path d="M563 499c0-4 3-7 5-9h5c2 2 5 5 5 9z" fill="#14c414" stroke="#111" strokeWidth="2" />
          </svg>
          <Tank className="top-[296px] left-[91px]" />
          <Tank className="top-[296px] left-[742px]" />
          <span className={`${label} top-[242px] left-[102px]`}>J1</span>
          <span className={`${label} top-[269px] left-[254px]`}>P1</span>
          <span className={`${label} top-[242px] left-[426px]`}>J2</span>
          <span className={`${label} top-[262px] left-[588px]`}>
            <span className="mr-[5px] text-[24px] text-[#e02a18]">&amp;</span>P2
          </span>
          <span className={`${label} top-[242px] left-[751px]`}>J3</span>
          <Legend />
          <svg viewBox="0 0 24 24" className="absolute top-[614px] left-[167px] h-6 w-6" aria-hidden="true">
            <path d="M12 1l4 5h-3v5h5V8l5 4-5 4v-3h-5v5h3l-4 5-4-5h3v-5H6v3l-5-4 5-4v3h5V6H8z" fill="#111" stroke="#fff" strokeWidth="1" paintOrder="stroke" />
          </svg>
        </div>
        <div className="flex w-6 justify-center pt-6">
          <span className="h-[780px] w-[3px] bg-[#8a8a8a]" />
        </div>
      </div>
      <div className="flex h-6 shrink-0 items-start pt-2 pl-[207px]">
        <span className="h-[3px] w-[909px] bg-[#858585]" />
      </div>
    </main>
  )
}

function StatusBar() {
  return (
    <footer className="flex h-[38px] shrink-0 items-center gap-2 border-t-2 border-white bg-gradient-to-b from-[#dadbe0] to-[#c9cad0] pr-2 pl-[14px] text-[15px] text-[#33333b]">
      <span className="flex-1">Base Scenario</span>
      <button type="button" className="-mr-1 h-[29px] w-[118px] bg-[#f68b10] text-[14px] font-bold text-white">Cautions Exist</button>
      <Sep />
      <button type="button" aria-label="Fit to window">
        <Svg size="h-[22px] w-[22px]">
          <path d="M1 1h22v22H1z" fill="#fff" stroke="#555" strokeWidth="1.4" />
          <path d="M9 9h6v6H9z" stroke="#345" />
          <path d="M12 2l3 4H9zM12 22l3-4H9zM2 12l4-3v6zM22 12l-4-3v6z" fill="#345" />
        </Svg>
      </button>
      <Sep />
      <Svg size="h-[22px] w-[22px]">
        <path d="M14 14l8 8" stroke="#777" strokeWidth="4" />
        <circle cx="9" cy="9" r="7" fill="#a9cdf0" stroke="#7b98bc" strokeWidth="2" />
      </Svg>
      <span>190%</span>
      <Sep />
      <button type="button" aria-label="Zoom out">
        <Svg size="h-5 w-5">
          <circle cx="12" cy="12" r="10" fill="#f4f4f4" stroke="#777" strokeWidth="1.6" />
          <path d="M7 12h10" stroke="#444" strokeWidth="2" />
        </Svg>
      </button>
      <input
        type="range"
        aria-label="Zoom"
        defaultValue={98}
        className="h-6 w-[198px] appearance-none bg-[linear-gradient(#a9a3b8,#a9a3b8)] bg-[length:100%_2px] bg-center bg-no-repeat [&::-webkit-slider-thumb]:h-5 [&::-webkit-slider-thumb]:w-[14px] [&::-webkit-slider-thumb]:appearance-none [&::-webkit-slider-thumb]:rounded-b-lg [&::-webkit-slider-thumb]:border [&::-webkit-slider-thumb]:border-[#8b8b9c] [&::-webkit-slider-thumb]:bg-[#f2f2fa]"
      />
      <button type="button" aria-label="Zoom in">
        <Svg size="h-5 w-5">
          <circle cx="12" cy="12" r="10" fill="#f4f4f4" stroke="#777" strokeWidth="1.6" />
          <path d="M7 12h10M12 7v10" stroke="#444" strokeWidth="2" />
        </Svg>
      </button>
      <span className="mr-2 ml-2 flex">
        <Svg size="h-[22px] w-[22px]">
          <path d="M2 2h18v14H2z" fill="#fff" stroke="#557" />
          <path d="M2 2h18v5H2z" fill="#7fa048" />
          <path d="M8 10h14v11H8z" fill="#c8d4e6" stroke="#345" strokeWidth="1.4" />
          <path d="M11 10h8v4h-8zM8 23h14" stroke="#345" fill="#fff" />
        </Svg>
      </span>
      <Sep />
      <Svg size="h-5 w-5">
        <path d="M1 12h22" stroke="#111" strokeWidth="3" />
        <path d="M10 7l6 5-6 5z" fill="#111" />
      </Svg>
      <span className="mr-1">2</span>
      <Sep />
      <span className="mr-1 ml-1 h-[14px] w-[14px] border-2 border-[#222] bg-[#10dcf0]" />
      <span>3</span>
      <Sep />
    </footer>
  )
}

/* ---------- right side ---------- */

function LayerPresets() {
  return (
    <section className="flex h-[238px] shrink-0 flex-col border border-r-0 border-[#a2a6ae] bg-white">
      <div className="flex h-7 items-center bg-[#e3e5e8] pr-[5px] pl-[6px]">
        <h2 className="flex-1 text-[15px] text-[#8e93a0]">Layer Presets</h2>
        <PinIcon />
      </div>
      <div className="flex h-10 items-center gap-[5px] border-y border-[#b6bac2] bg-gradient-to-b from-white to-[#f5f5fa] pr-[5px] pl-[5px]">
        <IconButton icon={<PlusIcon />} label="Add preset" />
        <Sep />
        <IconButton icon={<RenameIcon />} label="Rename preset" />
        <IconButton icon={<PagesIcon />} label="Duplicate preset" />
        <IconButton icon={<DeleteIcon />} label="Delete preset" />
        <button type="button" aria-label="Preset help" className="ml-auto"><InfoIcon /></button>
      </div>
      <table className="w-full table-fixed text-left text-[15px] text-[#666]">
        <thead className="bg-[#fafafa]">
          <tr className="h-[33px] border-b border-[#b6bac2]">
            <th className="border-r border-[#b6bac2] pl-[5px] font-normal">Layer Preset</th>
            <th className="w-[67px] border-r border-[#b6bac2] pl-[6px] font-normal">Load</th>
            <th className="w-[67px] border-r border-[#b6bac2] pl-[6px] font-normal">Update</th>
            <th className="w-[95px] pl-[6px] font-normal whitespace-nowrap">Link Scenario</th>
          </tr>
        </thead>
      </table>
    </section>
  )
}

function LayerRow({ name, icon, indent, heading, bold, selected, state, editing }) {
  return (
    <li className="flex h-[29px] items-center pr-[11px]">
      <span className={`flex shrink-0 items-center ${indent ? 'w-[50px]' : 'w-[26px]'}`}>
        {heading && <ChevronDown className="ml-[5px] h-5 w-5 text-[#333]" strokeWidth={2} />}
      </span>
      <span
        className={`flex h-full flex-1 items-center gap-[5px] ${icon ? 'pl-[3px]' : 'pl-[6px]'} ${heading ? 'bg-[#eeeeef]' : ''} ${
          selected ? 'bg-[#cbe3f7]' : ''
        } ${heading || bold ? 'font-semibold text-[#33333b]' : 'text-[#55555d]'}`}
      >
        {icon}
        <span className="flex-1">{name}</span>
        {editing && <PencilIcon />}
        {state && (
          <button type="button" aria-label={`Toggle ${name}`} className="mr-[41px]">
            {state === 'on' ? <Eye className="h-6 w-6 text-[#111]" strokeWidth={2} /> : <HiddenIcon />}
          </button>
        )}
      </span>
    </li>
  )
}

function Layers() {
  return (
    <section className="flex min-h-0 flex-1 flex-col border-t-2 border-l border-[#a2a6ae] bg-white">
      <div className="flex h-[31px] shrink-0 items-center gap-1 bg-gradient-to-b from-[#e7e7ea] to-[#dddde2] pb-[2px] pl-[17px]">
        <LayersIcon />
        <h2 className="text-[15px] font-semibold text-[#66666e]">Layers</h2>
      </div>
      <div className="flex h-10 shrink-0 items-center gap-[5px] border-b-2 border-[#b6bac2] bg-gradient-to-b from-white to-[#f5f5fa] pr-[7px] pl-[7px]">
        <IconButton icon={<PlusIcon />} label="Add layer" />
        <IconButton icon={<ArrowIcon />} label="Move up" />
        <IconButton icon={<ArrowIcon down />} label="Move down" />
        <Sep />
        <IconButton icon={<RenameIcon />} label="Rename layer" />
        <IconButton icon={<PagesIcon />} label="Duplicate layer" />
        <IconButton icon={<DeleteIcon />} label="Delete layer" />
        <Sep />
        <IconButton icon={<Eye className="h-6 w-6 text-[#111]" strokeWidth={2} />} label="Show layer" />
        <IconButton icon={<GearIcon />} label="Layer settings" />
        <Sep />
        <IconButton icon={<GearsIcon />} label="All layer settings" />
        <button type="button" aria-label="Layer help" className="ml-auto"><InfoIcon /></button>
      </div>
      <ul className="flex-1 pt-[14px] text-[15px]">
        <LayerRow name="Color Maps" icon={<ColorGridIcon />} heading />
        <LayerRow name="Max Velocity" icon={<ColorGridIcon />} indent selected state="on" />
        <LayerRow name="Standard" icon={<StandardIcon />} heading />
        <LayerRow name="Pipe Input" indent state="off" />
        <LayerRow name="Tanks" indent state="off" />
        <LayerRow name="[All Objects Layer]" indent bold state="on" editing />
      </ul>
      <div className="flex h-10 shrink-0 items-start border-t-2 border-[#a0a4ac] bg-[#efeff1] pl-1 text-[15px] text-[#4a4a52]">
        <button type="button" className="flex h-9 w-[112px] items-center justify-center gap-[2px] border-r-2 border-b border-[#9a9ea8] bg-[#e4e4e9]">
          <OrgIcon />
          Scenario
        </button>
        <button type="button" className="flex h-9 w-[122px] items-center justify-center gap-[3px] border-b border-[#9a9ea8] bg-[#e4e4e9]">
          <PropsIcon />
          Properties
        </button>
        <button type="button" className="-mt-[2px] flex h-10 w-[179px] items-center justify-center gap-[3px] border-r-2 border-b border-[#9a9ea8] bg-white whitespace-nowrap">
          <LayersIcon />
          Workspace Layers
        </button>
      </div>
    </section>
  )
}

function SidePanel() {
  return (
    <div className="flex w-[533px] shrink-0 flex-col overflow-hidden pt-[6px]">
      <LayerPresets />
      <Layers />
      <footer className="flex h-[38px] shrink-0 items-center border-t-2 border-white bg-gradient-to-b from-[#dadbe0] to-[#c9cad0] pl-[9px] text-[15px] whitespace-nowrap text-[#33333b]">
        <OverviewIcon />
        <span className="ml-[6px] flex-1">Overview Map</span>
        <ModulesIcon />
        <span className="mr-[15px] ml-[7px]">Add-on Modules</span>
        <Sep />
        <span className="-mr-[4px] ml-2 h-[21px] w-[21px] rounded-full border border-[#2c6a1c] bg-gradient-to-b from-[#a8e08c] to-[#3c9a24]" />
      </footer>
    </div>
  )
}

/* ---------- dialog ---------- */

function ConditionTable() {
  return (
    <div className="h-[282px] border-t-2 border-l-2 border-[#777] bg-[#ababab]">
      <table className="w-full table-fixed border-collapse text-center">
        <colgroup>
          <col className="w-[23px]" />
          <col className="w-[23px]" />
          <col className="w-[187px]" />
          <col />
          <col className="w-[25px]" />
        </colgroup>
        <thead className="bg-[#f0f0f0] text-[15px] leading-4">
          <tr className="h-10 border-b border-[#888]">
            <th colSpan={2} className="border-r border-[#999]" aria-label="Condition" />
            <th className="border-r border-[#999] pt-1 align-top font-normal whitespace-nowrap">Pressure Static Maximum<br />(bar)</th>
            <th colSpan={2} className="pt-1 align-top font-normal">Pipe<br />Color</th>
          </tr>
        </thead>
        <tbody className="bg-white">
          {CONDITIONS.map(c => (
            <tr key={c.value} className="h-[25px] border-b border-[#f0f0f0] last:border-[#777]">
              <td>&gt;</td>
              <td className="p-0">
                <button type="button" aria-label={`Operator for ${c.value}`} className="flex h-6 w-[21px] items-center justify-center border border-[#ccc]">
                  <ChevronDown className="h-5 w-5 shrink-0 text-[#555]" strokeWidth={1.5} />
                </button>
              </td>
              <td>{c.value}</td>
              <td className={c.bg} />
              <td className="p-0">
                <button type="button" aria-label={`Choose color for ${c.value}`} className="ml-[2px] flex h-[22px] w-5 items-center justify-center rounded-[5px] border-2 border-[#3a7ca8] bg-white leading-3">
                  ...
                </button>
              </td>
            </tr>
          ))}
        </tbody>
      </table>
    </div>
  )
}

function ColorMapSetup() {
  const [mode, setMode] = useState('Color Pipes')
  const checkbox = 'h-[17px] w-[17px] appearance-none rounded-[4px] border border-[#777] bg-[#f8f8f8]'
  return (
    <Group title="Color Map Setup" className="h-[411px] border-r-0 pl-[4px]">
      <div className="flex pl-[5px]">
        <div className="flex w-[545px] shrink-0 flex-col pt-[15px]">
          <Group title="Color Options" className="h-[55px] w-[450px] pl-[7px]">
            <div className="flex h-6 items-center gap-[13px] pl-[3px]">
              {['Color Pipes', 'Color Pipe Labels', 'Color Pipes and Labels'].map(o => (
                <label key={o} className="flex items-center gap-[7px] whitespace-nowrap">
                  <input
                    type="radio"
                    name="mode"
                    checked={mode === o}
                    onChange={() => setMode(o)}
                    className="h-[18px] w-[18px] appearance-none rounded-full border border-[#777] bg-white checked:border-[5px] checked:border-[#0a5fb8]"
                  />
                  {o}
                </label>
              ))}
            </div>
          </Group>
          <Group title="Data Options" className="mt-2 h-[107px] pl-[5px]">
            <div className="flex h-5 items-center pt-[12px]">
              <label className="flex w-[285px] shrink-0 items-center gap-2">
                <input type="checkbox" className={checkbox} />
                Show Value on Workspace Label
              </label>
              <label className="flex items-center gap-2">
                <input type="checkbox" className={checkbox} />
                Use Absolute Values
              </label>
            </div>
            <div className="mt-2 flex gap-[9px]">
              <div className="w-[332px]">
                <label htmlFor="parameter" className="block pl-1 leading-[23px]">Parameter:</label>
                <Select id="parameter" value="Pressure Static Maximum" />
              </div>
              <div className="w-[128px]">
                <label htmlFor="units" className="block pl-1 leading-[23px]">Units:</label>
                <Select id="units" value="bar" />
              </div>
            </div>
          </Group>
          <Group title="Color Parameter" className="mt-2 h-[117px] pl-[5px]">
            <div className="mt-[4px] flex h-[27px] items-center pl-[14px]">
              <label htmlFor="conditions" className="w-[152px]">Number of Conditions:</label>
              <Select id="conditions" value="5" className="w-[130px]" dark />
              <PushButton className="ml-7 h-6 w-[92px]">Generate</PushButton>
            </div>
            <dl className="mt-3 grid grid-flow-col grid-cols-[235px_1fr] grid-rows-2 pl-[14px] leading-[23px]">
              <dt>Min Value:</dt>
              <dd>10</dd>
              <dt>Max Value:</dt>
              <dd>17</dd>
            </dl>
          </Group>
        </div>
        <div className="mr-5 ml-[18px] flex-1 pt-[7px]">
          <div className="mb-[5px] flex justify-end pr-[6px]">
            <button type="button" aria-label="Color map help"><InfoIcon /></button>
          </div>
          <ConditionTable />
          <div className="mt-[10px] flex justify-between">
            <PushButton className="h-[26px] w-[93px]">Add Row</PushButton>
            <PushButton className="h-[26px] w-[118px]">Remove Row</PushButton>
            <PushButton className="h-[26px] w-[90px]">Clear All</PushButton>
            <PushButton className="h-[26px] w-[126px]">Reverse Colors</PushButton>
          </div>
        </div>
      </div>
    </Group>
  )
}

function LayerSettingsDialog() {
  return (
    <div
      role="dialog"
      aria-label="Layer Settings - Max Velocity"
      className="absolute top-[607px] left-[889px] flex w-[1342px] flex-col overflow-hidden rounded-[10px] border border-[#a8a8a8] bg-[#f0f0f0] text-[14px] text-[#222] shadow-[0_20px_56px_rgba(0,0,0,0.42)]"
    >
      <h2 className="flex h-10 items-center bg-white pb-[2px] pl-[10px] text-[15px]">Layer Settings - Max Velocity</h2>
      <div className="flex h-[476px] border-b-2 border-[#9a9a9a]">
        <div className="w-[264px] shrink-0 text-[14px]">
          <div className="flex h-10 items-center pr-4 pl-4">
            <MapPairIcon />
            <h3 className="ml-[6px] flex-1 font-semibold text-[#222]">Color Map</h3>
            <ChevronUp className="h-5 w-5 text-[#777]" strokeWidth={1.5} />
          </div>
          <button type="button" className="ml-[2px] h-[33px] w-[260px] bg-[#d3d3d3] pl-10 text-left text-[#4c4c54]">Color Map</button>
        </div>
        <div className={`min-w-0 flex-1 border-t-2 border-l-2 border-[#9a9a9a] pt-3 pl-4 ${FORM_FONT}`}>
          <ColorMapSetup />
          <PushButton className="mt-3 h-8 w-[215px] justify-start! pl-[2px]">
            <UndoIcon />
            <span className="ml-5">Reset Label Locations</span>
          </PushButton>
        </div>
      </div>
      <div className={`flex h-11 items-center justify-between bg-[#e3e3e3] pr-[15px] pl-[362px] ${FORM_FONT}`}>
        <PushButton className="h-8 w-[110px] justify-start! pl-[2px]">
          <HelpBulbIcon />
          <span className="ml-[14px]">Help</span>
        </PushButton>
        <PushButton className="h-8 w-[94px] justify-start! pl-[2px]">
          <Svg size="h-[22px] w-[22px]">
            <circle cx="12" cy="12" r="10" stroke="#111" strokeWidth="2.6" />
            <path d="M8 8l8 8M16 8l-8 8" stroke="#111" strokeWidth="3" />
          </Svg>
          <span className="ml-2">Close</span>
        </PushButton>
      </div>
    </div>
  )
}

export default function App() {
  return (
    <div className={`relative flex h-screen flex-col overflow-hidden bg-[#ebecf0] ${UI_FONT}`}>
      <TitleBar />
      <MenuBar />
      <MainToolbar />
      <div className="flex min-h-0 flex-1 gap-[7px]">
        <div className="flex min-w-0 flex-1 flex-col">
          <WorkspaceTabs />
          <div className="flex min-h-0 flex-1 flex-col border-r border-l-4 border-r-[#a9aeb8] border-l-[#5a606b]">
            <WorkspaceToolbar />
            <div className="flex min-h-0 flex-1 gap-[6px] pt-1 pr-[2px] pb-[2px] pl-[4px]">
              <Toolbox />
              <Canvas />
            </div>
            <StatusBar />
          </div>
        </div>
        <SidePanel />
      </div>
      <div className="h-2 shrink-0 border-t-2 border-[#8a8d94] bg-[#1f2228]" />
      <LayerSettingsDialog />
      <svg viewBox="0 0 18 28" className="absolute top-[533px] left-0 h-7 w-[18px]" aria-hidden="true">
        <path d="M0 1l16 16H9l4 8-4 2-4-8-5 3" fill="#fff" stroke="#555" strokeWidth="1.5" />
      </svg>
    </div>
  )
}
